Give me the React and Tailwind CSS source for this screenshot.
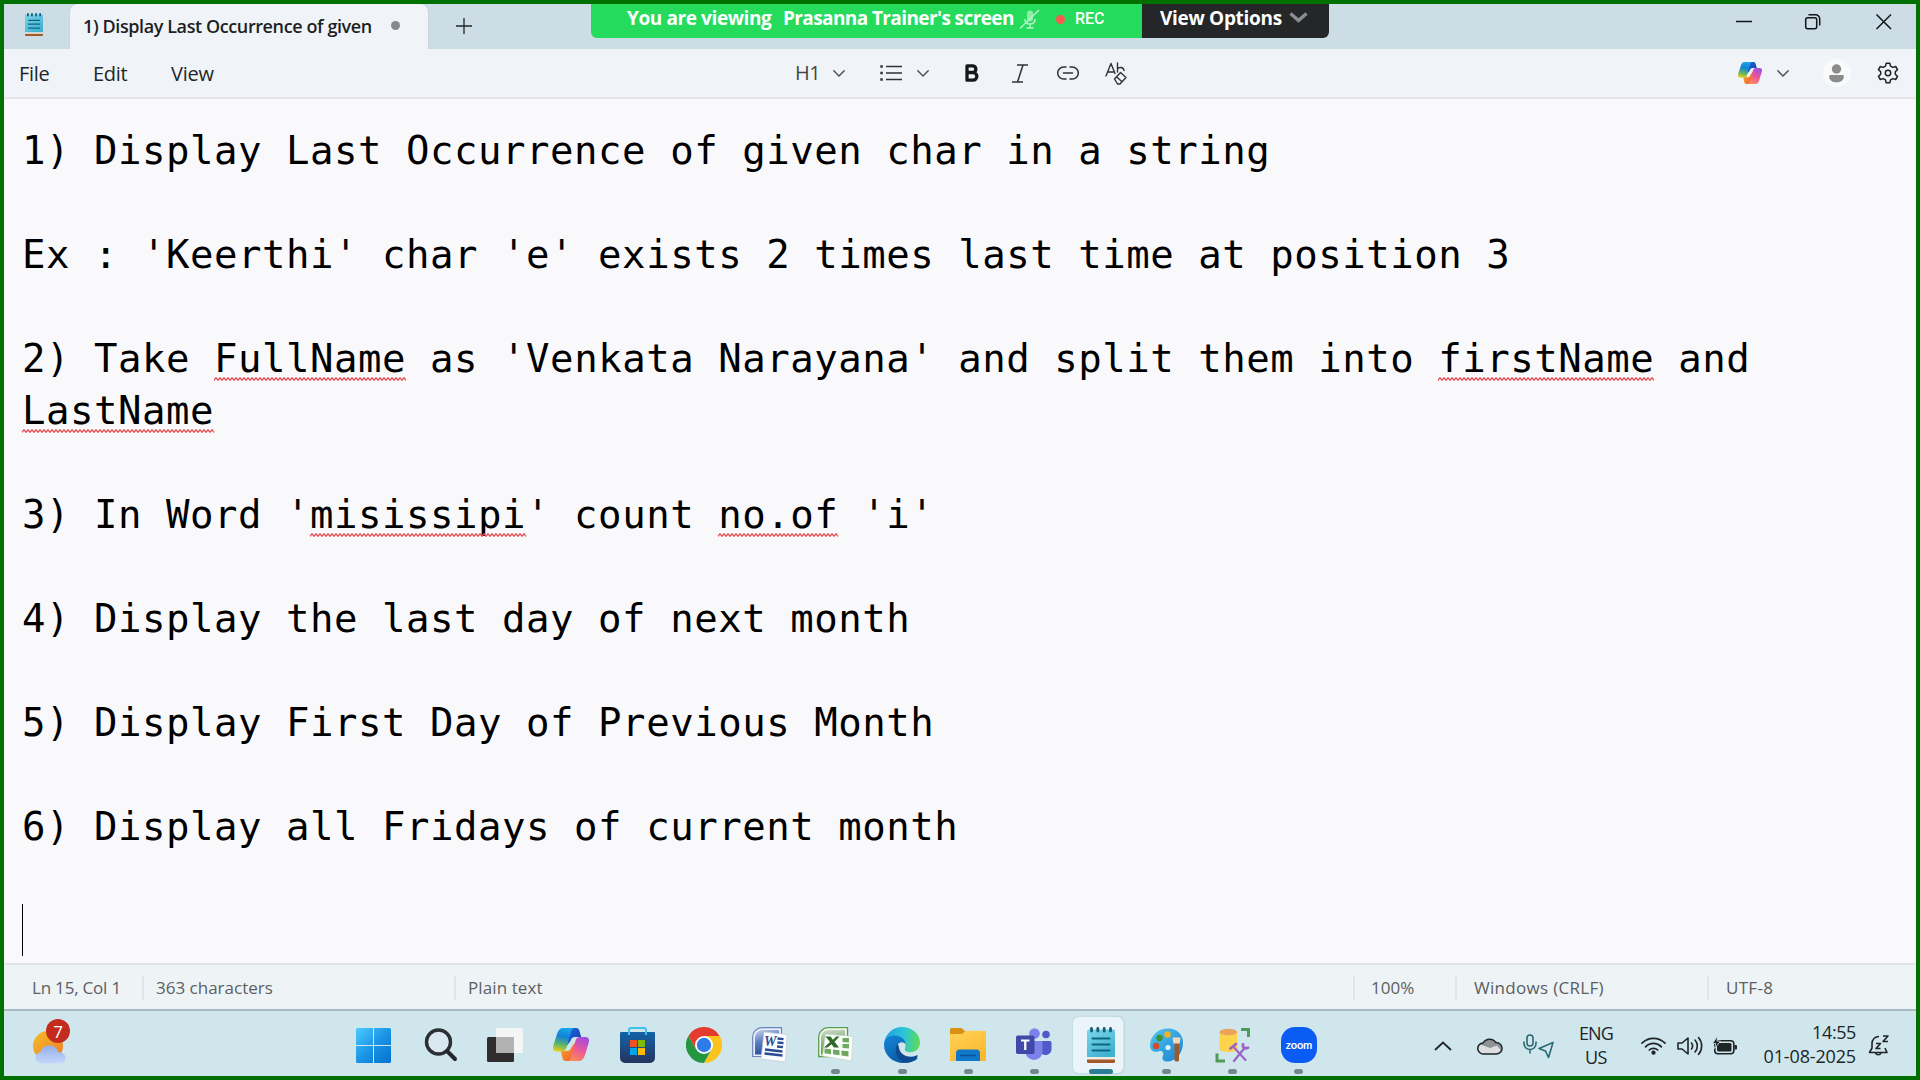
import { useId } from "react";

const lines = [
  ["1) Display Last Occurrence of given char in a string"],
  [],
  ["Ex : 'Keerthi' char 'e' exists 2 times last time at position 3"],
  [],
  ["2) Take ", { w: "FullName" }, " as 'Venkata Narayana' and split them into ", { w: "firstName" }, " and"],
  [{ w: "LastName" }],
  [],
  ["3) In Word '", { w: "misissipi" }, "' count ", { w: "no.of" }, " 'i'"],
  [],
  ["4) Display the last day of next month"],
  [],
  ["5) Display First Day of Previous Month"],
  [],
  ["6) Display all Fridays of current month"],
  [],
];

function Misspelt({ children }) {
  const id = useId();
  return (
    <span className="relative">
      {children}
      <svg className="absolute bottom-0 left-0 h-[4px] w-full" aria-hidden="true">
        <defs>
          <pattern id={id} width="4" height="4" patternUnits="userSpaceOnUse">
            <path d="M-1 2.5 L0 3.2 L2 .8 L4 3.2 L5 2" fill="none" stroke="#e8474c" strokeWidth="1.3" />
          </pattern>
        </defs>
        <rect width="100%" height="4" fill={`url(#${id})`} />
      </svg>
    </span>
  );
}

const Chevron = ({ className = "" }) => (
  <svg className={className} width="12" height="7" viewBox="0 0 12 7" fill="none" stroke="#4a4d50" strokeWidth="1.4" strokeLinecap="round" strokeLinejoin="round">
    <path d="M.8 .8 6 6 11.2 .8" />
  </svg>
);

function Copilot({ size }) {
  const a = useId();
  const b = useId();
  const c = useId();
  const d = useId();
  return (
    <svg width={size} height={size * 0.92} viewBox="0 0 36 33">
      <defs>
        <linearGradient id={a} x1=".5" y1="0" x2=".3" y2="1">
          <stop offset="0" stopColor="#1aa5e8" />
          <stop offset=".35" stopColor="#1182d8" />
          <stop offset=".7" stopColor="#5db568" />
          <stop offset="1" stopColor="#e9cf1c" />
        </linearGradient>
        <linearGradient id={b} x1=".7" y1="0" x2=".3" y2="1">
          <stop offset="0" stopColor="#a24de0" />
          <stop offset=".5" stopColor="#e9559b" />
          <stop offset="1" stopColor="#ff8a5c" />
        </linearGradient>
        <linearGradient id={c} x1="0" y1="0" x2="1" y2="1">
          <stop offset="0" stopColor="#1c6fe0" />
          <stop offset="1" stopColor="#1734a8" />
        </linearGradient>
        <linearGradient id={d} x1="0" y1="0" x2="1" y2="1">
          <stop offset="0" stopColor="#f9b62c" />
          <stop offset="1" stopColor="#f0512e" />
        </linearGradient>
      </defs>
      <path d="M17 0h6c2.200 0 3.200 1.300 3.700 3.600L28.200 9H22c-2.500 0-3.700 1.300-4.500 4L12 20z" fill={`url(#${c})`} />
      <path d="M19 33h-6c-2.200 0-3.200-1.300-3.700-3.600L7.800 23H14c2.500 0 3.700-1.300 4.500-4L24 12z" fill={`url(#${d})`} />
      <path d="M21 0H10C7 0 5.300 2 4.200 5.500L.5 17C-.8 21.500 .5 23.500 3.500 23.500h5.500c2.700 0 3.800-1.500 4.600-4.200L17.500 5.500C18.300 2.500 19 .8 21 0z" fill={`url(#${a})`} />
      <path d="M15 33H26c3 0 4.700-2 5.800-5.500L35.500 15.500c1.300-4.500 0-6.500-3-6.500H27c-2.700 0-3.800 1.500-4.600 4.200L18.500 27.500c-.8 3-1.500 4.700-3.500 5.500z" fill={`url(#${b})`} />
    </svg>
  );
}

function NotepadIcon({ width, height }) {
  const g = useId();
  return (
    <svg width={width} height={height} viewBox="0 0 28 36">
      <defs>
        <linearGradient id={g} x1="0" y1="0" x2=".6" y2="1">
          <stop offset="0" stopColor="#7fd6ea" />
          <stop offset="1" stopColor="#3fb2d2" />
        </linearGradient>
      </defs>
      <rect y="28" width="28" height="8" rx="1.500" fill="#a4592a" />
      <path d="M0 28h28v4.500H0z" fill="#f0e9e4" />
      <path d="M1.500 2.500h25A1.500 1.500 0 0 1 28 4v26H0V4a1.500 1.500 0 0 1 1.500-1.500z" fill={`url(#${g})`} />
      <path d="M4.500 1.500v2.500M10.800 1.500v2.500M17.200 1.500v2.500M23.500 1.500v2.500" stroke="#155d76" strokeWidth="2.800" strokeLinecap="round" />
      <path d="M5.500 11.500h17M5.500 17.500h17M5.500 23.500h17" stroke="#0f6680" strokeWidth="2" strokeLinecap="round" />
    </svg>
  );
}

const StartIcon = () => (
  <svg width="35" height="35" viewBox="0 0 35 35">
    <defs>
      <linearGradient id="start" gradientUnits="userSpaceOnUse" x1="0" y1="0" x2="35" y2="35">
        <stop offset="0" stopColor="#4fcbff" />
        <stop offset=".5" stopColor="#1b95e6" />
        <stop offset="1" stopColor="#0471cf" />
      </linearGradient>
    </defs>
    <path d="M1.500 0H17v17H0V1.500A1.500 1.500 0 0 1 1.500 0zM18 0h15.500A1.500 1.500 0 0 1 35 1.500V17H18zM0 18h17v17H1.500A1.500 1.500 0 0 1 0 33.500zM18 18h17v15.500a1.500 1.500 0 0 1-1.500 1.500H18z" fill="url(#start)" />
  </svg>
);

const SearchIcon = () => (
  <svg width="34" height="34" viewBox="0 0 34 34" fill="none">
    <circle cx="14.500" cy="14" r="12" fill="#dfe9f1" fillOpacity=".6" stroke="#2b2f33" strokeWidth="3.400" />
    <path d="M23.500 23.500 31 31" stroke="#24272a" strokeWidth="4" strokeLinecap="round" />
  </svg>
);

const TaskViewIcon = () => (
  <svg width="36" height="34" viewBox="0 0 36 34">
    <rect y="9" width="27" height="25" rx="1.500" fill="#2f2d2d" />
    <rect x="9" width="27" height="25" rx="1.500" fill="#f5f5f6" />
    <path d="M9 9h18v16H9z" fill="#b3b2b2" />
  </svg>
);

const StoreIcon = () => (
  <svg width="35" height="36" viewBox="0 0 35 36">
    <defs>
      <linearGradient id="store" x1="0" y1="0" x2="0" y2="1">
        <stop offset="0" stopColor="#1263a8" />
        <stop offset="1" stopColor="#25345f" />
      </linearGradient>
    </defs>
    <path d="M1 5h33a1 1 0 0 1 1 1v25a5 5 0 0 1-5 5H5a5 5 0 0 1-5-5V6a1 1 0 0 1 1-1z" fill="url(#store)" />
    <path d="M9 8V3a2 2 0 0 1 2-2h13a2 2 0 0 1 2 2v5" fill="none" stroke="#3cc3ec" strokeWidth="2" />
    <path d="M10 13h7v7h-7z" fill="#f25022" />
    <path d="M18 13h7v7h-7z" fill="#7fba00" />
    <path d="M10 21h7v7h-7z" fill="#00a4ef" />
    <path d="M18 21h7v7h-7z" fill="#ffb900" />
  </svg>
);

const ChromeIcon = () => (
  <svg width="36" height="36" viewBox="0 0 36 36">
    <path d="M2.400 9A18 18 0 0 0 18 36l7.800-13.500L18 18 10.200 22.500z" fill="#249642" />
    <path d="M33.600 9H18v9l7.800 4.500L18 36A18 18 0 0 0 33.600 9z" fill="#fcc31c" />
    <path d="M2.400 9A18 18 0 0 1 33.600 9H18v9l-7.800 4.500z" fill="#e33b2e" />
    <circle cx="18" cy="18" r="9" fill="#fff" />
    <circle cx="18" cy="18" r="7.200" fill="#2f7be8" />
  </svg>
);

const WordIcon = () => (
  <svg width="36" height="36" viewBox="0 0 36 36">
    <defs>
      <linearGradient id="word" x1="0" y1="0" x2=".3" y2="1">
        <stop offset="0" stopColor="#c9d5ee" />
        <stop offset=".5" stopColor="#5b7dc0" />
        <stop offset="1" stopColor="#2a4d9b" />
      </linearGradient>
    </defs>
    <path d="M10 .7h19.500V29.500H.7V10A9.300 9.300 0 0 1 10 .7z" fill="#e8eefa" stroke="#6c83bd" strokeWidth="1.200" />
    <path d="M10.500 3H27v24.500H3V10.500A7.500 7.500 0 0 1 10.500 3z" fill="url(#word)" />
    <path d="M12 5 35 7.500 33.500 35 9 32z" fill="#fbfcfe" stroke="#c6cbd8" strokeWidth=".7" />
    <text x="12" y="19" fontFamily="Liberation Serif" fontWeight="700" fontStyle="italic" fontSize="14" fill="#2c4a94">W</text>
    <path d="M25.500 11.500l6 .6M25.500 15.500l6 .6M25 19.500l6 .7M13 22.500l17.500 2M12.500 26.500l18 2" stroke="#2c4a94" strokeWidth="2.300" />
  </svg>
);

const ExcelIcon = () => (
  <svg width="36" height="36" viewBox="0 0 36 36">
    <defs>
      <linearGradient id="excel" x1="0" y1="0" x2=".2" y2="1">
        <stop offset="0" stopColor="#cfdccb" />
        <stop offset=".5" stopColor="#8fb588" />
        <stop offset="1" stopColor="#5a9a4c" />
      </linearGradient>
    </defs>
    <path d="M10 .7h19.500V29.500H.7V10A9.300 9.300 0 0 1 10 .7z" fill="#eff6ec" stroke="#5d9d4e" strokeWidth="1.300" />
    <path d="M10.500 3H27v24.500H3V10.500A7.500 7.500 0 0 1 10.500 3z" fill="url(#excel)" />
    <path d="M7.500 7 35 9.500 33.500 34 4.500 29z" fill="#fcfefb" stroke="#c7d2c4" strokeWidth=".7" />
    <path d="M24.500 11h6.500v4.500l-6.500-.5zM24.500 17h6.500v4.500l-6.500-.5zM23.500 23.500l7 .8v5.200l-7-1zM15 22.500l6.500.8v5l-6.500-1zM6.500 21.500l6.500.8v5l-6.500-1z" fill="#6fa85f" />
    <path d="M7.500 9.500h5l2.500 3.300 3.200-3.300h3.300l-5 5.300 4.500 5.700h-5l-2.500-3.300-4 3.300H6l6-5.500z" fill="#2d6a27" />
  </svg>
);

const EdgeIcon = () => (
  <svg width="36" height="36" viewBox="0 0 36 36">
    <defs>
      <linearGradient id="edgeTop" x1="0" y1=".4" x2="1" y2=".5">
        <stop offset="0" stopColor="#1f9fe0" />
        <stop offset=".55" stopColor="#2cc5d6" />
        <stop offset="1" stopColor="#5fdc52" />
      </linearGradient>
      <linearGradient id="edgeBottom" x1="0" y1="0" x2=".6" y2="1">
        <stop offset="0" stopColor="#1286d8" />
        <stop offset="1" stopColor="#0c59a4" />
      </linearGradient>
    </defs>
    <path d="M0 17C.8 7.500 8.500 0 18 0c10 0 18 7 18 15.500 0 6-4.500 9.800-9.500 9.800-4.500 0-6.500-1.800-5.500-4 1.500-3.500-.5-8.300-6.500-9.300C8 11 2 13 0 17z" fill="url(#edgeTop)" />
    <path d="M0 18c0-5.500 4.500-9.500 10.500-9.500 6 0 11 4 11 8.500-1.500-2-6-3-8 1-2 4.500.5 13 9 14.500 4 .7 7-.5 9.500-1.800 1-.5 1.800.3 1.200 1.200C30 34.500 24.500 36 19.500 36 8.500 36 0 28 0 18z" fill="url(#edgeBottom)" />
    <path d="M13.500 17c-4.500 7 0 18.500 10 18.500 4 0 8-2.500 10-6 .5-1-.3-1.500-1.200-1-6 3-16 .5-17.300-7.500-.2-1.500-.5-3-1.500-4z" fill="#0e4a8f" />
  </svg>
);

const FolderIcon = () => (
  <svg width="36" height="34" viewBox="0 0 36 34">
    <defs>
      <linearGradient id="folder" x1="0" y1="0" x2=".5" y2="1">
        <stop offset="0" stopColor="#ffd35a" />
        <stop offset="1" stopColor="#fbb92e" />
      </linearGradient>
    </defs>
    <path d="M0 1.500A1.500 1.500 0 0 1 1.500 0h10L16 4v5H0z" fill="#d8920f" />
    <path d="M0 6h12l4-3.200h18.500A1.500 1.500 0 0 1 36 4.300V33H0z" fill="url(#folder)" />
    <path d="M6 33v-8a3.500 3.500 0 0 1 3.500-3.500h17A3.500 3.500 0 0 1 30 25v8z" fill="#1177c8" />
    <path d="M11 27.500h14" stroke="#0b4f91" strokeWidth="1.500" strokeLinecap="round" />
  </svg>
);

const TeamsIcon = () => (
  <svg width="36" height="34" viewBox="0 0 36 34">
    <circle cx="30" cy="6.500" r="3.800" fill="#5059c9" />
    <path d="M24 13h10a1.500 1.500 0 0 1 1.500 1.500V21a6 6 0 0 1-10 4.500z" fill="#5059c9" />
    <circle cx="18.500" cy="5.500" r="5.300" fill="#7b83eb" />
    <path d="M10 13h16.500v10.500a8.500 8.500 0 0 1-17 0z" fill="#7b83eb" />
    <rect y="7.500" width="18.500" height="18.500" rx="1.800" fill="#4149a8" />
    <path d="M5 12.500h8.500M9.250 12.500v9.500" stroke="#fff" strokeWidth="2.200" />
  </svg>
);

const PaintIcon = () => (
  <svg width="36" height="36" viewBox="0 0 36 36">
    <defs>
      <linearGradient id="paint" x1="0" y1="0" x2="1" y2="1">
        <stop offset="0" stopColor="#55c4f2" />
        <stop offset="1" stopColor="#1583cf" />
      </linearGradient>
    </defs>
    <path d="M19 1.500c9 0 15 6 15 14 0 11-7 19-16 19-4 0-5.500-2.500-4-6 1.300-3-1.300-5.500-4-4.300C6 26 1 24 1 18.500 1 9 9 1.500 19 1.500z" fill="url(#paint)" />
    <circle cx="7" cy="19" r="3.200" fill="#d34a25" />
    <circle cx="10.500" cy="11" r="3.200" fill="#39932f" />
    <circle cx="18.500" cy="7.500" r="3.200" fill="#f4b51b" />
    <circle cx="19" cy="20.500" r="2.600" fill="#d8f1fb" />
    <path d="M25.500 15h4.500v18a1.500 1.500 0 0 1-1.500 1.500H27a1.500 1.500 0 0 1-1.500-1.500z" fill="#9b5a2d" />
    <path d="M23.500 10.500h8l-.8 6h-6.300z" fill="#f2d6bd" />
  </svg>
);

const DatabaseToolsIcon = () => (
  <svg width="36" height="36" viewBox="0 0 36 36">
    <path d="M26 2.500h7.500V10M2 26.500v7.500h8" fill="none" stroke="#4f9b58" strokeWidth="3" />
    <path d="M4.500 5h17.500v17c0 1.500-3 3-8.500 3s-9-1.500-9-3z" fill="#fcd34a" />
    <ellipse cx="13.300" cy="5" rx="8.800" ry="3.300" fill="#eba35c" />
    <path d="M19 34 29.500 21M30.500 33 19.500 21" stroke="#9a63c4" strokeWidth="2.200" strokeLinecap="round" />
    <path d="M15.500 21.500l5.500-4.500M28 17.500c-.5 3 1.500 4.500 5 3.300" fill="none" stroke="#9a63c4" strokeWidth="2.800" strokeLinecap="round" />
  </svg>
);

const ZoomIcon = () => (
  <div className="flex size-9 items-center justify-center rounded-[14px] bg-[#0b5cf5] pb-[2px] font-['Lato',sans-serif] text-[11px] leading-none font-bold tracking-[-0.1px] text-white">
    zoom
  </div>
);

const apps = [
  { icon: <StartIcon /> },
  { icon: <SearchIcon />, nudge: "translate-x-[2px]" },
  { icon: <TaskViewIcon /> },
  { icon: <Copilot size={36} /> },
  { icon: <StoreIcon /> },
  { icon: <ChromeIcon /> },
  { icon: <WordIcon /> },
  { icon: <ExcelIcon />, open: true },
  { icon: <EdgeIcon />, open: true },
  { icon: <FolderIcon />, open: true },
  { icon: <TeamsIcon />, open: true },
  { icon: <NotepadIcon width={28} height={36} />, active: true },
  { icon: <PaintIcon />, open: true },
  { icon: <DatabaseToolsIcon />, open: true },
  { icon: <ZoomIcon />, open: true },
];

function TaskbarApp({ icon, open, active, nudge = "" }) {
  return (
    <div className="relative flex h-full w-[66.150px] items-center justify-center">
      {active && (
        <>
          <div className="absolute top-[6px] left-[44px] h-[56px] w-[12px] rounded-r-md bg-[#e3f1f6] shadow-[0_0_2px_#a9bfc8]" />
          <div className="absolute top-[6px] left-[5px] h-[56px] w-[50px] rounded-md bg-[#ebf5f9] shadow-[0_0_2px_#b4c8d0]" />
        </>
      )}
      <div className={`relative mt-[3px] ${nudge}`}>{icon}</div>
      {open && <div className="absolute bottom-[2px] left-[28.500px] h-[5px] w-[9px] rounded-full bg-[#738790]" />}
      {active && <div className="absolute bottom-[2px] left-[21px] h-[5px] w-[24px] rounded-full bg-[#2b7e93]" />}
    </div>
  );
}

function TitleBar() {
  return (
    <div className="flex h-[45px] shrink-0 bg-[#cddde6]">
      <div className="w-[66px] pt-[8px] pl-[21px]">
        <NotepadIcon width={18} height={25} />
      </div>
      <div className="relative flex w-[358px] items-center rounded-t-[8px] bg-[#f0f4f9] pl-[13px] shadow-[0_0_2px_#b7c8d1] [clip-path:inset(0_-3px_0_-3px)]">
        <span className="w-[292px] pb-px font-['Open_Sans',sans-serif] text-[18px] font-semibold tracking-[-0.4px] whitespace-nowrap text-[#1d1f21]">
          1) Display Last Occurrence of given
        </span>
        <span className="mb-[3px] ml-[16px] size-[9px] rounded-full bg-[#87898c]" />
      </div>
      <svg className="mt-[14px] ml-[28px]" width="16" height="16" viewBox="0 0 16 16" stroke="#222527" strokeWidth="1.300">
        <path d="M8 0v16M0 8h16" />
      </svg>
      <svg className="mt-[9px] mr-[24px] ml-auto" width="156" height="17" viewBox="0 0 156 17" fill="none" stroke="#111416" strokeWidth="1.500">
        <path d="M0 8.500h16" />
        <rect x="69.700" y="4.700" width="11" height="11" rx="2" />
        <path d="M72.500 1.700h7a4.200 4.200 0 0 1 4.200 4.200V12.500" />
        <path d="M140.500 1.500l14.500 14.500M155 1.500l-14.500 14.500" />
      </svg>
    </div>
  );
}

function ToolBar() {
  return (
    <div className="flex h-[50px] shrink-0 items-center border-b-2 border-[#e3e5e8] bg-[#f0f4f8] font-['Open_Sans',sans-serif] text-[20px] text-[#232628]">
      <span className="w-[74px] pt-[2px] pl-[15px] tracking-[-0.3px]">File</span>
      <span className="w-[78px] pt-[2px] pl-[15px] tracking-[-0.3px]">Edit</span>
      <span className="w-[78px] pt-[2px] pl-[15px] tracking-[-0.2px]">View</span>
      <span className="ml-[561px] w-[38px] text-[20px] tracking-[-0.5px] text-[#44474a]">H1</span>
      <Chevron />
      <svg className="ml-[35px]" width="22" height="18" viewBox="0 0 22 18" fill="none" stroke="#303336" strokeWidth="1.400">
        <path d="M6 2.500h16M6 9h16M6 15.500h16" />
        <path d="M.3 2.500h2.500M.3 9h2.500M.3 15.500h2.500" strokeWidth="2.500" />
      </svg>
      <Chevron className="ml-[15px]" />
      <svg className="ml-[36px]" width="14" height="18" viewBox="0 0 14 18" fill="none" stroke="#16181a" strokeWidth="3.300" strokeLinejoin="round">
        <path d="M2 1.800h5.500a3.200 3.200 0 0 1 0 6.700H2zM2 8.500h6a3.700 3.700 0 0 1 0 7.700H2z" />
      </svg>
      <svg className="ml-[32px]" width="18" height="19" viewBox="0 0 18 19" stroke="#303336" strokeWidth="1.500">
        <path d="M6 1h11M1 18h11M12 1 6.500 18" />
      </svg>
      <svg className="ml-[28px]" width="22" height="14" viewBox="0 0 22 14" fill="none" stroke="#303336" strokeWidth="1.500" strokeLinecap="round">
        <path d="M9 1H6.700a6 6 0 0 0 0 12H9M13 1h2.300a6 6 0 0 1 0 12H13M6.500 7h9" />
      </svg>
      <svg className="ml-[26px]" width="23" height="23" viewBox="0 0 23 23" fill="none" stroke="#303336" strokeWidth="1.400" strokeLinecap="round" strokeLinejoin="round">
        <path d="M1 14 6 1.500l4 10M2.800 10h6M12.500 1v9M12.500 7c1-2 6-2.500 6.500 1.500M9.500 17l6-6.500 5.500 5-6 6.500h-2.500zM11.500 14.700l5.500 5" />
      </svg>
      <div className="ml-auto flex items-center pr-[16px]">
        <Copilot size={24} />
        <Chevron className="ml-[15px]" />
        <div className="ml-[34px] flex size-[28px] items-center justify-center rounded-full bg-[#f9fafb]">
          <svg width="16" height="19" viewBox="0 0 16 19" fill="#8b8b8c">
            <circle cx="7.500" cy="5" r="4.700" />
            <path d="M1.500 11h12a1.300 1.300 0 0 1 1.300 1.300c0 4-3 6-7.300 6s-7.300-2-7.300-6A1.300 1.300 0 0 1 1.500 11z" />
          </svg>
        </div>
        <svg className="ml-[25px]" width="24" height="24" viewBox="0 0 24 24" fill="none" stroke="#1f2224" strokeWidth="1.500" strokeLinejoin="round">
          <path d="M9.500 4.200 10.200 1.300h3.600l.7 2.900 2.300 1.300 2.900-.9 1.800 3.100-2.200 2.100v2.600l2.200 2.100-1.800 3.100-2.900-.9-2.300 1.300-.7 2.900h-3.600l-.7-2.900-2.300-1.300-2.900.9-1.800-3.100 2.200-2.100v-2.600L2.500 7.700l1.800-3.100 2.900.9z" transform="translate(0 .9)" />
          <circle cx="12" cy="12" r="2.700" />
        </svg>
      </div>
    </div>
  );
}

function Editor() {
  return (
    <div className="h-[864px] shrink-0 bg-[#f9f8fb] pt-[25px] pl-[18px] font-['DejaVu_Sans_Mono',monospace] text-[39px] leading-[52px] tracking-[0.525px] whitespace-pre text-black">
      {lines.map((parts, i) => (
        <div key={i} className="h-[52px] pt-px">
          {parts.map((p, j) => (typeof p === "string" ? <span key={j}>{p}</span> : <Misspelt key={j}>{p.w}</Misspelt>))}
        </div>
      ))}
      <div className="h-[52px] w-px bg-black" />
    </div>
  );
}

function StatusBar() {
  return (
    <div className="flex h-[48px] shrink-0 items-center border-t-2 border-b-2 border-t-[#dfe6e8] border-b-[#a7b9c2] bg-[#eef3f6] pt-px font-['Open_Sans',sans-serif] text-[17px] text-[#5c5f62]">
      <span className="w-[138px] pl-[28px] tracking-[-0.2px]">Ln 15, Col 1</span>
      <span className="flex h-[24px] w-[312px] items-center border-l-2 border-[#e0e5e9] pl-[12px]">363 characters</span>
      <span className="flex h-[24px] w-[899px] items-center border-l-2 border-[#e0e5e9] pl-[12px] tracking-[0.1px]">Plain text</span>
      <span className="flex h-[24px] w-[102px] items-center border-l-2 border-[#e0e5e9] pl-[16px]">100%</span>
      <span className="flex h-[24px] w-[252px] items-center border-l-2 border-[#e0e5e9] pl-[17px] tracking-[0.3px]">Windows (CRLF)</span>
      <span className="flex h-[24px] items-center border-l-2 border-[#e0e5e9] pl-[17px] tracking-[0.3px]">UTF-8</span>
    </div>
  );
}

function Weather() {
  return (
    <div className="relative mt-[9px] ml-[28px] h-[46px] w-[40px]">
      <svg width="40" height="46" viewBox="0 0 40 46">
        <defs>
          <linearGradient id="sun" x1="0" y1="0" x2="1" y2="1">
            <stop offset="0" stopColor="#f5bd2b" />
            <stop offset="1" stopColor="#ee7a24" />
          </linearGradient>
          <linearGradient id="cloud" x1="0" y1="0" x2="0" y2="1">
            <stop offset="0" stopColor="#93aeea" />
            <stop offset="1" stopColor="#c7d7fa" />
          </linearGradient>
        </defs>
        <circle cx="16" cy="26" r="15" fill="url(#sun)" />
        <path d="M9 43.500a5.800 5.800 0 0 1-.5-11.500c1-4 4.500-6.500 9-6.500 5 0 8 3 8.700 6.800 4-.5 7.300 2 7.300 5.700 0 3.500-2.500 5.500-5.500 5.500z" fill="url(#cloud)" />
      </svg>
      <span className="absolute -top-px left-[14px] flex size-[24px] items-center justify-center rounded-full bg-[#c42b1f] font-['Open_Sans',sans-serif] text-[17px] leading-none text-white">7</span>
    </div>
  );
}

function Tray() {
  return (
    <div className="ml-auto flex h-full items-center pt-[4px] pr-[26px] font-['Open_Sans',sans-serif] text-[18px] leading-[23px] text-[#202527]">
      <svg width="18" height="10" viewBox="0 0 18 10" fill="none" stroke="#202527" strokeWidth="1.800" strokeLinecap="round">
        <path d="M1.500 8.500 9 1.500l7.500 7" />
      </svg>
      <svg className="ml-[25px]" width="26" height="18" viewBox="0 0 26 18">
        <path d="M7 17a5.500 5.500 0 0 1-1-10.900A7.500 7.500 0 0 1 19 5.500 5.800 5.800 0 0 1 19.500 17z" fill="#8e9296" />
        <path d="M7 17a5.500 5.500 0 0 1-3.500-9.500L13 11l7-2.500 4 5L19.500 17z" fill="#dcdee0" />
        <path d="M6.500 17a5.500 5.500 0 0 1-.5-11A7.600 7.600 0 0 1 19 5.600 5.700 5.700 0 0 1 19.700 17z" fill="none" stroke="#202527" strokeWidth="1.500" />
      </svg>
      <svg className="ml-[20px]" width="32" height="26" viewBox="0 0 32 26" fill="none" stroke="#2a6874" strokeWidth="1.600" strokeLinecap="round" strokeLinejoin="round">
        <rect x="4" y="2" width="6" height="11" rx="3" />
        <path d="M1 9v1.500a6 6 0 0 0 12 0V9M7 16.500V20M30 9.500 16 15.500l6.500 2.500 3 6.500z" />
      </svg>
      <div className="ml-[22px] w-[38px] text-center">
        <div className="-translate-y-px tracking-[-0.8px]">ENG</div>
        <div className="tracking-[-0.6px]">US</div>
      </div>
      <svg className="ml-[26px]" width="25" height="19" viewBox="0 0 25 19" fill="none" stroke="#202527" strokeWidth="1.700" strokeLinecap="round">
        <path d="M1 7.200a16 16 0 0 1 23 0M4.600 10.800a11 11 0 0 1 15.800 0M8.300 14a6 6 0 0 1 8.400 0" />
        <circle cx="12.500" cy="16.700" r="1.300" fill="#202527" />
      </svg>
      <svg className="ml-[11px]" width="26" height="22" viewBox="0 0 26 22" fill="none" stroke="#202527" strokeWidth="1.600" strokeLinecap="round" strokeLinejoin="round">
        <path d="M1 8v6h4l6 5V3L5 8zM14.500 8a5 5 0 0 1 0 6M18 5a9 9 0 0 1 0 12M21.500 2.500a13 13 0 0 1 0 17" />
      </svg>
      <svg className="ml-[9px]" width="26" height="20" viewBox="0 0 26 20" fill="none">
        <rect x="2.800" y="4.800" width="19" height="13" rx="3" stroke="#202527" strokeWidth="1.600" />
        <rect x="5" y="7" width="14.500" height="8.500" rx="1.500" fill="#202527" />
        <path d="M22.500 9h1.500a1 1 0 0 1 1 1v2.500a1 1 0 0 1-1 1h-1.500z" fill="#202527" />
        <path d="M5.500 0 .5 7.500h3.200L2.500 12.500 8.500 5H5z" fill="#202527" stroke="#cfe6ed" strokeWidth=".8" />
      </svg>
      <div className="ml-[14px] w-[104px] text-right">
        <div className="-translate-y-[2px] tracking-[-0.4px]">14:55</div>
        <div className="-translate-y-px tracking-[-0.15px]">01-08-2025</div>
      </div>
      <svg className="ml-[12px]" width="22" height="24" viewBox="0 0 22 24" fill="none" stroke="#202527" strokeWidth="1.600" strokeLinejoin="round">
        <path d="M11 2.500C7 2.500 4 5.500 4 9.500V14l-2.500 4.500H19L17 14M7.500 19a3 3 0 0 0 5.500 0M8 9.500h4.500L8 14.500h4.500M15 2h5l-5 5.500h5" />
      </svg>
    </div>
  );
}

function Taskbar() {
  return (
    <div className="flex h-[65px] shrink-0 bg-[#d0e6ed]">
      <Weather />
      <div className="ml-[268px] flex h-full">
        {apps.map((app, i) => (
          <TaskbarApp key={i} {...app} />
        ))}
      </div>
      <Tray />
    </div>
  );
}

function ShareBanner() {
  return (
    <div className="flex h-[38px] overflow-hidden rounded-b-md font-['Open_Sans',sans-serif] text-[19px] font-bold text-white">
      <div className="flex w-[551px] items-center bg-[#24db5c] pl-[36px]">
        <span className="w-[156px] pb-[2px] tracking-[-0.4px] whitespace-nowrap">You are viewing</span>
        <span className="w-[236px] pb-[2px] tracking-[-0.6px] whitespace-nowrap">Prasanna Trainer's screen</span>
        <svg width="21" height="21" viewBox="0 0 21 21" fill="none" stroke="#b5f3c7" strokeWidth="1.500">
          <rect x="8" y="1.500" width="6" height="11" rx="3" fill="#8eebaa" stroke="none" />
          <path d="M6 10c0 3 2 5 5 5s5-2 5-5M11 15v4M7.500 19h7M1 19.500 20 1" />
        </svg>
        <span className="ml-[16px] size-[9px] rounded-full bg-[#fb5a50]" />
        <span className="ml-[10px] font-['Roboto',sans-serif] text-[16px] font-medium">REC</span>
      </div>
      <div className="flex w-[187px] items-center bg-[#252628] pl-[18px]">
        <span className="w-[129px] pb-[2px] tracking-[-0.3px] whitespace-nowrap">View Options</span>
        <svg className="mb-[3px]" width="19" height="11" viewBox="0 0 19 11" fill="none" stroke="#8c8d8f" strokeWidth="3.500">
          <path d="M1.500 1.500 9.500 8.500l8-7" />
        </svg>
      </div>
    </div>
  );
}

export default function App() {
  return (
    <div className="relative flex h-[1080px] w-[1920px] flex-col overflow-hidden border-4 border-[#007100]">
      <TitleBar />
      <ToolBar />
      <Editor />
      <StatusBar />
      <Taskbar />
      <div className="absolute -top-1 left-[587px]">
        <ShareBanner />
      </div>
    </div>
  );
}
